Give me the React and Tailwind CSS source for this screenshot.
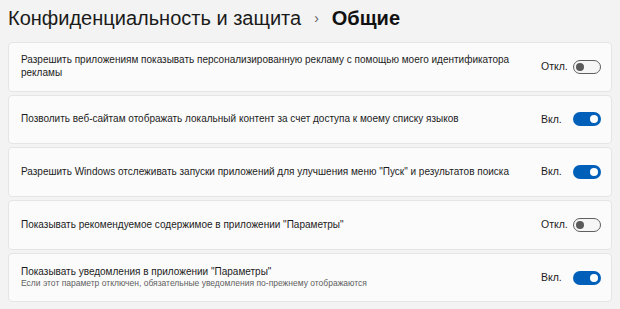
import React from 'react';

const settings = [
    {
        label: 'Разрешить приложениям показывать персонализированную рекламу с помощью моего идентификатора рекламы',
        on: false,
    },
    {
        label: 'Позволить веб-сайтам отображать локальный контент за счет доступа к моему списку языков',
        on: true,
    },
    {
        label: 'Разрешить Windows отслеживать запуски приложений для улучшения меню "Пуск" и результатов поиска',
        on: true,
    },
    {
        label: 'Показывать рекомендуемое содержимое в приложении "Параметры"',
        on: false,
    },
    {
        label: 'Показывать уведомления в приложении "Параметры"',
        hint: 'Если этот параметр отключен, обязательные уведомления по-прежнему отображаются',
        on: true,
    },
];

const Toggle = ({ on }) => (
    <div className="flex items-center">
        <span className="w-[32px] text-[10.5px] text-[#1b1b1b]">{on ? 'Вкл.' : 'Откл.'}</span>
        <div
            className={
                on
                    ? 'w-[28px] h-[14px] rounded-full bg-[#005fb8] flex items-center justify-end px-[3px]'
                    : 'w-[28px] h-[14px] rounded-full bg-[#f6f6f6] border border-[#5f5f5f] flex items-center justify-start px-[2px]'
            }
        >
            <div className={on ? 'w-[8px] h-[8px] rounded-full bg-white' : 'w-[8px] h-[8px] rounded-full bg-[#5a5a5a]'} />
        </div>
    </div>
);

const App = () => {
    return (
        <div className="w-[620px] h-[309px] bg-[#f3f3f3] overflow-hidden" style={{ fontFamily: '"Liberation Sans", sans-serif' }}>
            <div className="flex items-center h-[34px] pl-[8px] pt-[2px]">
                <span className="text-[20px] text-[#1a1a1a]">Конфиденциальность и защита</span>
                <span className="text-[14px] text-[#5f5f5f] mx-[13px]">›</span>
                <span className="text-[20px] font-bold text-[#111]">Общие</span>
            </div>
            <div className="flex flex-col gap-[3.2px] px-[8px] pt-[8px]">
                {settings.map((s, i) => (
                    <div key={i} className="h-[49.5px] bg-[#fbfbfb] border border-[#e5e5e5] rounded-[4px] flex items-center pl-[12px] pr-[10px]">
                        <div className="flex-1 pr-[30px]">
                            <div className="text-[10px] leading-[12.5px] text-[#1b1b1b]">{s.label}</div>
                            {s.hint && <div className="text-[8.5px] leading-[11px] text-[#5f5f5f]">{s.hint}</div>}
                        </div>
                        <Toggle on={s.on} />
                    </div>
                ))}
            </div>
        </div>
    );
};

export default App;
